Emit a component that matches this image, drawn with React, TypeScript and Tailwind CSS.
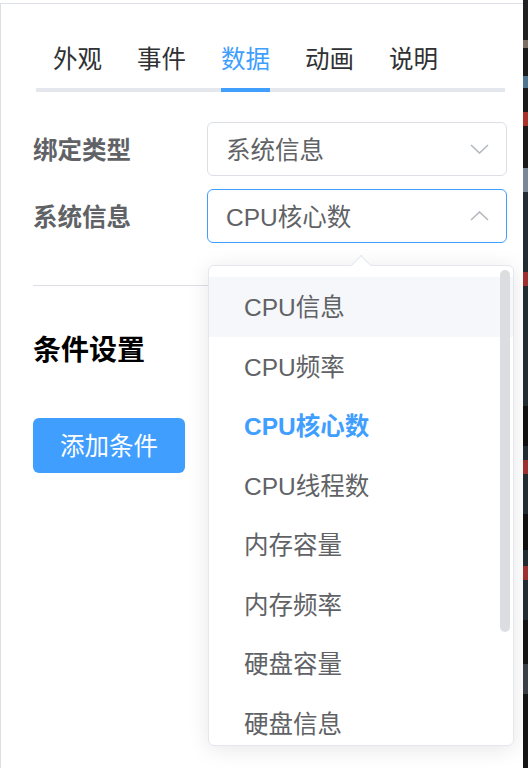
import React from "react";

const tabs = ["外观", "事件", "数据", "动画", "说明"];
const options = [
  "CPU信息",
  "CPU频率",
  "CPU核心数",
  "CPU线程数",
  "内存容量",
  "内存频率",
  "硬盘容量",
  "硬盘信息",
];

function Chevron({ up }: { up?: boolean }) {
  return (
    <svg width="19" height="10" viewBox="0 0 19 10" fill="none">
      {up ? (
        <polyline points="1,9 9.5,1 18,9" stroke="#b4b8bf" strokeWidth="1.6" />
      ) : (
        <polyline points="1,1 9.5,9 18,1" stroke="#b4b8bf" strokeWidth="1.6" />
      )}
    </svg>
  );
}

function Select({ value, open }: { value: string; open?: boolean }) {
  return (
    <div
      className={`w-[300px] h-[54px] rounded-[6px] border flex items-center justify-between pl-[18px] pr-[17px] bg-white ${
        open ? "border-[#409eff]" : "border-[#dcdfe6]"
      }`}
    >
      <span className="pt-[4px] text-[24.5px] text-[#606266]">{value}</span>
      <Chevron up={open} />
    </div>
  );
}

export default function App() {
  return (
    <div className="flex w-[528px] h-[768px] overflow-hidden bg-white font-['Liberation_Sans','Noto_Sans_CJK_SC',sans-serif]">
      <div className="relative w-[523px] h-full pt-[3px] bg-white">
        <div className="h-full border-t border-l border-[#dcdfe6]">
          {/* tabs */}
          <div className="ml-[35px] mr-[18px] mt-[24px] flex border-b-4 border-[#e4e7ed] pl-[17px] gap-[35px]">
            {tabs.map((t) => (
              <div
                key={t}
                className={`-mb-1 border-b-4 pt-[4px] leading-[56px] text-[24.5px] ${
                  t === "数据"
                    ? "border-[#409eff] text-[#409eff]"
                    : "border-transparent text-[#303133]"
                }`}
              >
                {t}
              </div>
            ))}
          </div>

          {/* form */}
          <div className="mt-[30px] ml-[32px] flex flex-col gap-[13px]">
            <div className="flex items-center">
              <div className="w-[174px] pt-[4px] text-[24.5px] font-bold text-[#606266]">绑定类型</div>
              <Select value="系统信息" />
            </div>
            <div className="flex items-center">
              <div className="w-[174px] pt-[4px] text-[24.5px] font-bold text-[#606266]">系统信息</div>
              <Select value="CPU核心数" open />
            </div>
          </div>

          <div className="mt-[42px] ml-[32px] mr-[16px] h-px bg-[#dcdfe6]" />

          <div className="mt-[45px] ml-[32px] text-[28px] leading-[40px] font-bold text-black">
            条件设置
          </div>

          <button className="mt-[47px] ml-[32px] w-[152px] h-[55px] pt-[4px] rounded-[6px] bg-[#409eff] text-white text-[24.5px] flex items-center justify-center">
            添加条件
          </button>
        </div>

        {/* dropdown popper */}
        <div className="absolute left-[208px] top-[265px] w-[306px] h-[481px] rounded-[6px] border border-[#e4e7ed] bg-white shadow-[0_3px_21px_rgba(0,0,0,0.1)]">
          <div className="absolute left-[145px] -top-[8px] w-[14px] h-[14px] rotate-45 bg-white border-t border-l border-[#e4e7ed]" />
          <div className="relative h-full overflow-hidden rounded-[6px]">
            <div className="pt-[11px]">
              {options.map((o, i) => (
                <div
                  key={o}
                  className={`h-[59.5px] flex items-center pl-[35px] pt-[4px] text-[24.5px] ${
                    i === 0 ? "bg-[#f5f7fa]" : ""
                  } ${o === "CPU核心数" ? "text-[#409eff] font-bold" : "text-[#606266]"}`}
                >
                  {o}
                </div>
              ))}
            </div>
            <div className="absolute right-[3px] top-[4px] w-[10px] h-[362px] rounded-full bg-[#dcdde0]" />
          </div>
        </div>
      </div>

      {/* background editor strip */}
      <div className="w-[5px] h-full bg-[#1a1a1a] flex flex-col">
        <div className="h-[40px] bg-[#202020]" />
        <div className="h-[8px] bg-[#7a6f60]" />
        <div className="h-[28px]" />
        <div className="h-[12px] bg-[#4d7590]" />
        <div className="h-[24px]" />
        <div className="h-[14px] bg-[#a83228]" />
        <div className="h-[42px] bg-[#1a1a1a]" />
        <div className="h-[24px] bg-[#7a8896]" />
        <div className="h-[80px] bg-[#222d33]" />
        <div className="h-[14px] bg-[#a03030]" />
        <div className="h-[120px] bg-[#222d33]" />
        <div className="h-[40px] bg-[#111]" />
        <div className="h-[14px] bg-[#222d33]" />
        <div className="h-[14px] bg-[#a03030]" />
        <div className="h-[40px] bg-[#222d33]" />
        <div className="h-[36px] bg-[#111]" />
        <div className="h-[16px] bg-[#222d33]" />
        <div className="h-[14px] bg-[#a03030]" />
        <div className="h-[40px] bg-[#222d33]" />
        <div className="h-[44px] bg-[#151515]" />
        <div className="h-[30px] bg-[#3a3f48]" />
        <div className="flex-1 bg-[#151515]" />
      </div>
    </div>
  );
}
